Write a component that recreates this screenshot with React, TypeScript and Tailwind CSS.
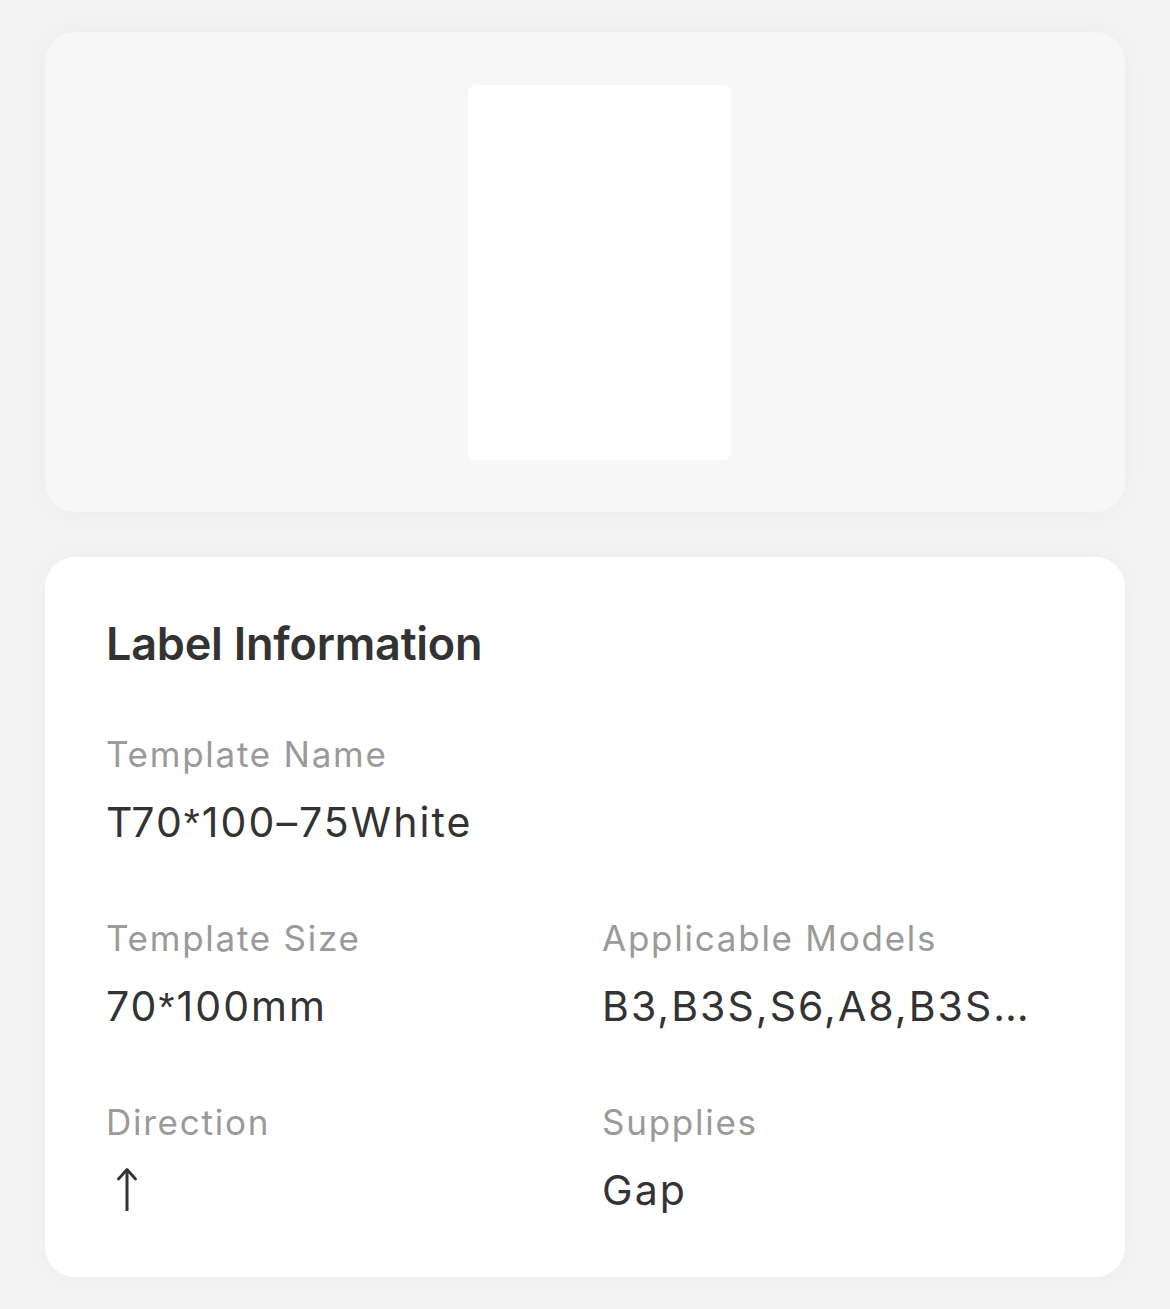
import React from "react";

function UpArrow() {
  return (
    <svg width="22" height="44" viewBox="0 0 22 44" fill="none" className="ml-[11px] mt-[3px]">
      <path d="M10 2.5 L10 45" stroke="#333" strokeWidth="3" strokeLinecap="butt" />
      <path d="M1.5 12 L10 2.5 L18.5 12" stroke="#333" strokeWidth="2.8" strokeLinecap="round" strokeLinejoin="round" />
    </svg>
  );
}

function Star() {
  return <span style={{ fontFamily: "'Liberation Sans', Arial, sans-serif" }}>*</span>;
}

function Field({ label, children }: { label: string; children: React.ReactNode }) {
  return (
    <div className="flex flex-col">
      <div className="text-[35px] leading-[44px] tracking-[0.05em] text-[#9a9a9a]">{label}</div>
      <div className="mt-[20px] h-[52px] text-[41px] leading-[52px] tracking-[0.05em] text-[#333333] whitespace-nowrap">{children}</div>
    </div>
  );
}

export default function App() {
  return (
    <div
      className="min-h-[1309px] w-full bg-[#f3f3f3] px-[45px] pt-[32px] pb-[32px]"
      style={{ fontFamily: "Inter, 'Noto Sans', sans-serif" }}
    >
      <div className="flex h-[480px] items-center justify-center rounded-[30px] bg-[#f7f7f7] pl-[29px] shadow-[0_0_24px_rgba(0,0,0,0.035)]">
        <div className="h-[375px] w-[263px] rounded-[8px] bg-white" />
      </div>

      <div className="mt-[45px] h-[720px] rounded-[30px] bg-white px-[61px] pt-[59px] shadow-[0_0_24px_rgba(0,0,0,0.03)]">
        <div className="text-[45px] font-semibold leading-[56px] tracking-[-0.005em] text-[#333333]">Label Information</div>

        <div className="mt-[60px]">
          <Field label="Template Name">
            T70<Star />100–75White
          </Field>
        </div>

        <div className="mt-[68px] grid grid-cols-[496px_1fr]">
          <Field label="Template Size">
            70<Star />100mm
          </Field>
          <Field label="Applicable Models">B3,B3S,S6,A8,B3S…</Field>
        </div>

        <div className="mt-[68px] grid grid-cols-[496px_1fr]">
          <Field label="Direction">
            <UpArrow />
          </Field>
          <Field label="Supplies">Gap</Field>
        </div>
      </div>
    </div>
  );
}
